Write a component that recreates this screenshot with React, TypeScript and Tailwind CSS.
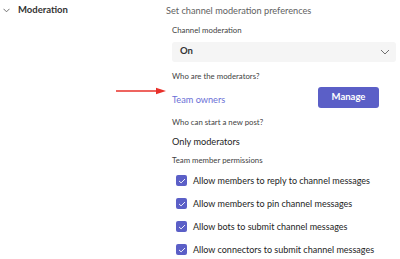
import React from 'react';

const permissions = [
  'Allow members to reply to channel messages',
  'Allow members to pin channel messages',
  'Allow bots to submit channel messages',
  'Allow connectors to submit channel messages',
];

const Check: React.FC = () => (
  <span className="w-[11px] h-[11px] rounded-[2px] bg-[#5b5fc7] flex items-center justify-center shrink-0">
    <svg width="8" height="8" viewBox="0 0 8 8" fill="none">
      <path d="M1.3 4.2 L3.1 5.9 L6.7 2.3" stroke="#fff" strokeWidth="0.9" strokeLinecap="round" strokeLinejoin="round" />
    </svg>
  </span>
);

export default function App() {
  return (
    <div
      className="w-[400px] h-[259px] bg-white overflow-hidden text-[#242424] flex whitespace-nowrap"
      style={{ fontFamily: 'Lato, "Noto Sans", sans-serif' }}
    >
      <section className="w-[166px] shrink-0 flex pt-[2px]">
        <div className="flex items-center h-[17px] pl-[3px]">
          <svg width="7" height="5" viewBox="0 0 7 5" fill="none">
            <path d="M0.5 0.8 L3.5 3.8 L6.5 0.8" stroke="#616161" strokeWidth="0.9" />
          </svg>
          <h3 className="ml-[8px] text-[9.5px] font-bold text-[#333]">Moderation</h3>
        </div>
      </section>

      <section className="flex-1 pt-[2px] pr-[4px]">
        <p className="h-[17px] flex items-center text-[9.2px] text-[#616161]">Set channel moderation preferences</p>

        <div className="pl-[6px]">
          <p className="mt-[5px] text-[7.8px] leading-[13.5px] text-[#424242]">Channel moderation</p>
          <div className="mt-[4px] h-[20px] rounded-[3px] bg-[#f5f5f5] flex items-center justify-between pl-[8px] pr-[6px]">
            <span className="text-[9.5px] font-bold text-[#333]">On</span>
            <svg width="10" height="6" viewBox="0 0 10 6" fill="none">
              <path d="M1 1 L5 5 L9 1" stroke="#616161" strokeWidth="0.9" />
            </svg>
          </div>

          <p className="mt-[8px] text-[7.8px] leading-[13.5px] text-[#424242]">Who are the moderators?</p>
          <div className="mt-[2px] flex items-center justify-between pr-[17px]">
            <div className="relative">
              <span className="text-[9.2px] leading-[16.5px] text-[#6b6fd6]">Team owners</span>
              <svg className="absolute left-[-56px] top-[1px]" width="52" height="10" viewBox="0 0 52 10" fill="none">
                <path d="M0 5 L42 5" stroke="#e8302a" strokeWidth="1.6" />
                <path d="M40 1.8 L50 5 L40 8.2 Z" fill="#e8302a" />
              </svg>
            </div>
            <button className="w-[61px] h-[21px] rounded-[3px] bg-[#5b5fc7] text-white text-[9.5px] font-bold">
              Manage
            </button>
          </div>

          <p className="mt-[7px] text-[7.8px] leading-[13.5px] text-[#424242]">Who can start a new post?</p>
          <p className="mt-[4px] text-[9.2px] leading-[16.5px]">Only moderators</p>
          <p className="mt-[4px] text-[7.8px] leading-[13.5px] text-[#424242]">Team member permissions</p>

          <ul className="mt-[5px] pl-[4px] flex flex-col gap-[7px]">
            {permissions.map((label, index) => (
              <li key={index} className="flex items-center h-[16px]">
                <Check />
                <span className="ml-[6px] text-[9px]">{label}</span>
              </li>
            ))}
          </ul>
        </div>
      </section>
    </div>
  );
}
